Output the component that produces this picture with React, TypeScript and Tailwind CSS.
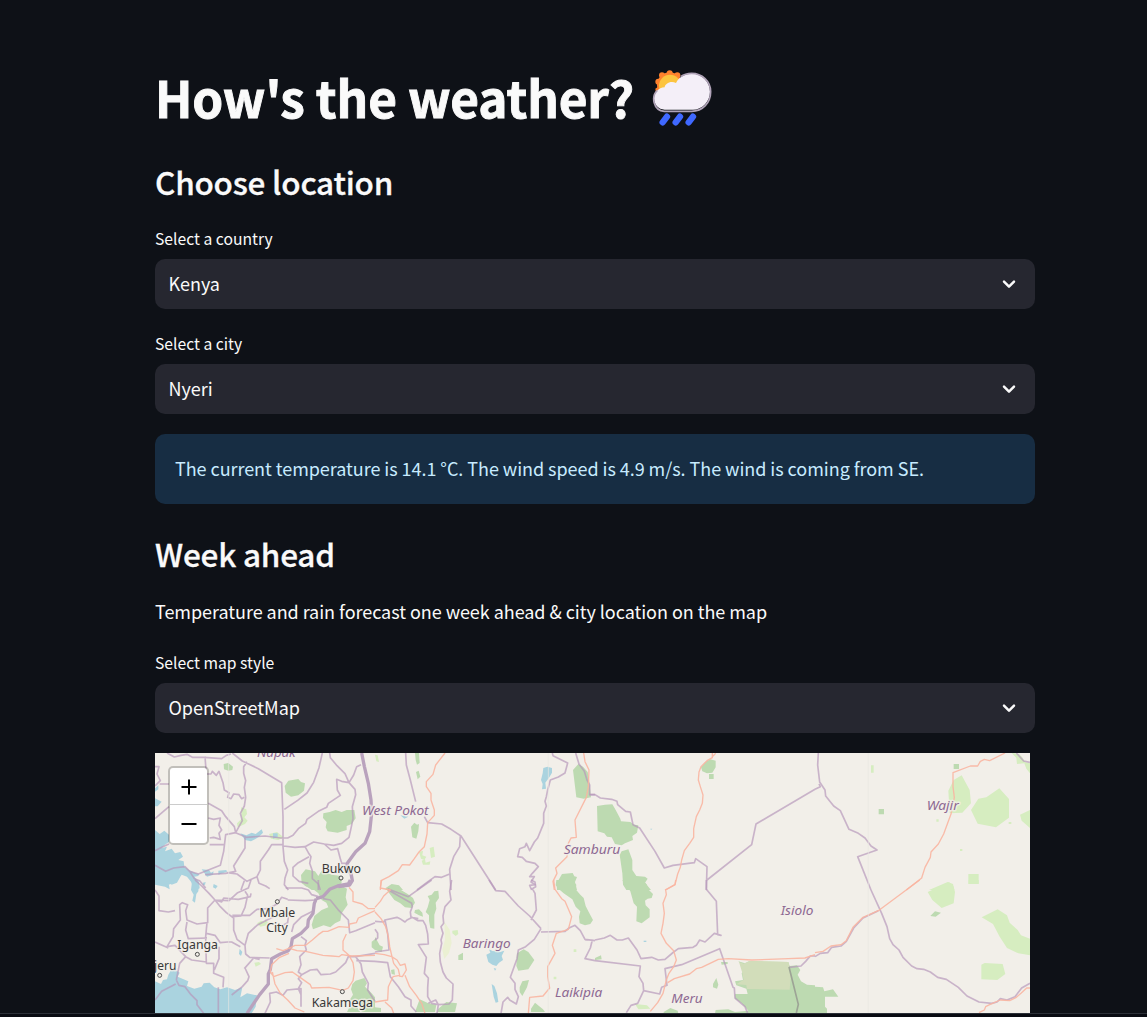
import React from "react";

const FONT = "font-['Noto_Sans_CJK_SC','Noto_Sans_CJK_JP',sans-serif]";

function RainCloud() {
  return (
    <svg viewBox="0 0 180 170" className="mb-px h-[56.7px] w-[60px]" aria-label="sun behind rain cloud">
      <g fill="#ff822d">
        <circle cx="19" cy="38" r="9" /><circle cx="30" cy="19" r="9" /><circle cx="53" cy="13" r="9" /><circle cx="76" cy="19" r="9" />
        <circle cx="53" cy="48" r="38" />
        <path d="M10 59l12-8 4 14-14 8z" />
      </g>
      <circle cx="54" cy="50" r="33" fill="#fcc43f" />
      <path d="M38 122C19 122 6 106 6 88c0-17 13-32 32-33 1-10 17-21 34-13C81 22 101 14 119 14c31 0 55 24 55 54s-24 54-51 54z" fill="#f4eff8" />
      <path d="M16 64C-3 82 3 124 37 127h82c33 0 57-26 57-59 0-31-26-55-57-55-13 0-25 4-33 10" fill="none" stroke="#b0a3b8" strokeWidth="5" />
      <g stroke="#3f68ff" strokeWidth="19" strokeLinecap="round">
        <path d="M45 143L32 160M84 143L71 160M123 143L110 160" />
      </g>
    </svg>
  );
}

function Select({ label, value }: { label: string; value: string }) {
  return (
    <div className="flex flex-col">
      <div className="flex h-[31px] items-start text-[15.7px] leading-[22px] text-[#fafafa]">{label}</div>
      <button className="flex h-[50px] w-full items-center justify-between rounded-[10px] bg-[#262730] pr-[19px] pl-[13.5px] text-left text-[18px] leading-[30px] tracking-[-0.02px] text-[#fafafa]">
        <span className="pb-[2px]">{value}</span>
        <svg viewBox="0 0 14 10" className="h-[10px] w-[14px]" fill="none" stroke="#fafafa" strokeWidth="2.5" strokeLinecap="round" strokeLinejoin="round">
          <path d="M2 2.6l5 5 5-5" />
        </svg>
      </button>
    </div>
  );
}

type Tile = { x: number; y: number; green?: string; lime?: string; water?: string; roads?: string; borders?: string; thick?: string };

/* Map artwork, split in tiles; three units are one pixel. */
const tiles: Tile[] = [
  {
    x: 0, y: -9,
    green: "M389 108L400 92 430 87 438 96 450 100 447 122 430 136 408 140 392 128zM505 190L524 186 542 180 560 186 575 180 598 180 602 205 590 222 575 228 575 240 548 248 518 244 512 232 515 216 504 204zM206 42L220 39 234 50 232 60 220 62 207 58zM438 375L452 358 480 364 490 378 500 362 530 374 558 378 560 400 536 420 470 420 440 400z",
    lime: "M258 172L274 178 276 192 268 202 278 212 270 222 248 232 246 220 260 206zM342 252L366 246 386 262 370 270 348 266z",
    water: "M0 240L14 252 28 242 42 254 42 276 30 284 20 294 36 290 30 304 50 296 60 310 76 306 84 320 70 330 86 334 88 350 102 360 122 370 132 372 130 378 118 380 132 395 134 415 122 420 108 395 96 380 80 374 76 380 66 398 50 404 40 394 44 418 30 410 0 404zM256 250L274 256 290 248 302 252 320 238 324 248 312 260 300 268 288 274 270 270zM354 250L368 250 368 262 354 266zM140 358L162 360 168 368 176 364 174 374 156 380zM190 362L214 360 216 366 202 370 190 374zM0 115L10 106 10 118 0 125zM0 145L20 155 8 169 0 169zM144 398L152 396 150 404 144 406zM176 402L188 408 182 416 174 412z",
    borders: "M36 9L58 21 78 16 96 13 112 22 148 22 200 26 214 16 228 12M232 9L262 33 310 56 380 98 384 200 384 290 388 334 398 360 390 384 388 404 400 420M502 9L492 53 476 97 456 129 428 151 388 178M524 9L526 23 546 47 570 71 582 98 600 118 602 134 592 170 594 206 588 235 582 262 560 280 536 286 508 282 476 276 450 290 420 292 386 288M618 44L605 50 596 75 582 98 560 94 545 88 547 120 556 136 520 160 515 172 490 184 456 208 452 220 430 236 414 256 398 264 378 264M378 264L330 258 274 262 242 248 238 230 212 200 200 182 160 160M0 50L12 50 6 72 16 92 0 108M14 102L42 102M150 20L154 72 168 72 172 64 184 76 192 64 204 98 208 120 222 128 218 142 228 146 236 132 252 134 260 146 268 142M276 35L266 50 266 70 272 92 268 112 272 142 268 168 256 190 262 212 254 226 242 248M0 206L42 170M160 204L176 208 196 204 192 226 200 240 192 250 196 268 176 262 164 264M164 284L206 284M242 248L212 254 206 304 196 346 160 360 130 372 104 364 90 350 56 354 32 364 0 346M270 262L270 294 236 348 242 364 212 370 150 374M216 368L246 372 276 394 306 380 316 360 316 334 340 300 350 284 384 284M450 290L460 308 468 320 464 340 472 362 472 386 490 402 496 420M462 320L430 338 414 352 414 378 432 394 460 400M508 282L528 300 548 296 556 326 560 340 580 340M104 364L118 386 134 392 152 414M268 392L258 420M306 380L312 400 332 408 344 416M42 282L20 292 0 302",
    thick: "M620 9L628 49 640 100 648 150 650 190 644 245 630 280 602 305 578 338 572 356 588 370 592 392 584 405 550 410",
  },
  {
    x: 0, y: 381,
    green: "M440 0L486 0 494 14 506 26 526 22 540 14 560 18 576 26 572 52 578 74 560 100 556 122 540 130 526 142 506 136 474 148 470 134 478 108 500 90 520 82 514 68 500 60 490 40 470 24 450 18zM592 312L602 302 628 294 636 310 630 320 650 340 660 352 660 396 620 396 618 382 596 364 584 360 594 344 588 328zM582 384L604 376 616 396 576 396zM650 185L660 178 660 210 650 202z",
    lime: "M306 130L318 122 328 126 332 118 340 128 336 136 316 140zM298 248L312 246 318 252 302 260z",
    water: "M110 0L118 8 126 0 132 10 130 34 124 42 120 68 112 62 116 44 108 30 110 14zM40 284L52 264 74 278 68 290 100 304 96 318 118 326 140 320 146 310 164 308 178 322 196 328 216 322 240 330 262 322 256 352 276 340 306 346 302 380 290 400 0 400 0 304 18 312 24 300 36 298zM254 206L262 216 258 228 252 222zM34 0L48 0 48 12 40 14z",
    roads: "M582 22L594 36 594 64 622 72 640 86 660 86M660 92L610 114 604 128 584 132 582 142 552 140 518 154 504 154 490 164 472 180 452 196 420 196 404 204 384 212 364 206M400 204L426 212 452 214 504 226 530 228 552 230 560 224 590 228 660 226M574 162L564 184 564 210 582 226 594 248 598 276 594 302 580 324 562 332M402 220L374 232 350 254 346 276 356 290 390 278 412 276 432 290 452 304 466 314 470 324 522 322 566 332M352 276L360 312 376 340 398 360 420 384 448 396",
    borders: "M0 30L12 48 12 92 40 96 60 92M120 0L140 18 162 40 180 60 222 62 248 38 280 24 288 0M180 60L158 84 158 128 126 132 96 120 92 92 98 74 82 68 74 74 76 120 56 146 54 170 36 200M180 60L200 66 206 54 250 58 286 50 288 40M270 34L278 46 270 82 258 108 232 110M180 60L196 80 214 98 236 114 236 150 246 178 270 196M232 106L284 106 306 88 340 86 366 72 380 52 398 58M270 196L280 160 306 136 336 120 356 110M270 196L272 222 284 232 344 234M96 126L92 150 100 176 156 174M156 128L152 170 154 250 176 250 176 280 206 292 204 322M154 160L180 166 196 188 218 186 230 186 256 200M192 200L192 236 178 270M268 266L296 234 314 238M270 264L282 290 278 302 262 320 230 345M92 230L110 240 154 246M92 230L74 250 64 300M36 200L60 196 92 230M64 300L72 316 90 320 108 344 126 362 126 374 146 400M0 360L20 334 62 312M190 322L190 400M0 186L40 204M330 400L346 366 344 340 364 336 384 346 396 330 438 326 438 380M438 170L454 182 450 196 454 210 434 230 438 254 430 276 440 284 466 270 486 268 498 284 526 282 542 276 572 248 580 230 602 230M440 284L430 296 440 308 430 326 438 344M660 128L602 152 584 158 580 120 552 92 526 60 504 56M602 230L618 252 622 276 640 310 638 330 660 364M602 230L660 220M660 244L604 242M490 30L490 0M476 92L440 110 416 134 410 156M398 60L450 62 484 60M392 24L440 24 460 30 470 44 490 50M400 110L398 128 384 136",
    thick: "M484 56L478 70 474 100 460 120 458 140 438 160 412 176 408 200 400 212 376 222 350 236 346 268 340 282 340 312 314 344 276 400M484 56L504 50 524 28 548 18 580 12 586 0",
  },
  {
    x: 660, y: -9,
    green: "M120 9L132 9 134 39 126 44 122 30zM123 66L131 62 136 80 128 88zM108 230L118 218 126 224 132 222 130 244 124 266 112 262zM594 60L610 42 624 50 638 66 642 86 648 142 626 146 604 142zM545 400L561 372 593 369 598 379 606 381 600 396 606 420 546 420zM32 414L50 402 72 406 84 420 32 420z",
    lime: "M132 306L144 302 142 316 154 320 148 330 138 326zM164 294L176 290 180 320 168 324zM140 332L150 328 152 338 166 334 164 344 144 344zM0 14L8 16 12 36 4 34z",
    water: "M505 54L517 50 531 54 531 68 523 82 511 98 513 116 501 118 503 102 498 90 503 70zM76 196L100 200 88 206z",
    roads: "M210 9L182 45 174 73 154 95 154 110 168 130 168 150 178 180 178 196 158 218 156 252 148 290 132 306 118 326 104 345 82 344 70 362 42 380 18 392 16 420M626 9L630 35 642 60 640 110 634 142 600 210 604 262 588 264 580 280 576 320 542 354 546 370 534 394 538 420",
    borders: "M92 9L94 45 106 90 122 155M148 200L158 218 200 222 228 238 258 258 362 420M256 258L254 290 236 320 224 358 228 420M224 372L200 382 180 380 160 394 126 420M532 9L534 17 578 39 570 69 550 81 526 90 518 120 514 140 510 154 514 168 506 190 506 220 488 264 478 276 464 302 454 280 450 290 434 296 428 320 442 322 454 334 480 340 490 350 472 370 464 380 478 380 468 396 480 404 464 406 470 420M602 9L612 42 628 64 636 90 644 105 644 134 660 134",
  },
  {
    x: 660, y: 381,
    green: "M34 28L50 16 66 16 78 30 98 42 114 54 120 68 110 84 90 82 76 70 58 60 46 44zM178 34L190 32 192 54 182 68 184 86 178 104 178 146 166 144 162 122 162 106 152 96 158 82 164 60 158 48 170 44zM120 90L132 88 142 98 144 110 132 106 118 98zM544 0L590 0 604 14 602 28 616 44 626 54 632 78 640 94 654 120 646 132 630 136 614 130 612 110 616 94 602 80 592 58 566 40 552 28 542 16zM426 220L446 208 460 216 478 240 460 268 430 272 424 258zM434 322L442 304 462 300 456 322 442 348 434 336zM186 396L190 386 214 366 246 370 240 396zM468 386L480 368 504 388 510 396 468 396zM120 396L134 358 160 370 184 374 180 396zM0 170L14 196 24 200 20 216 0 210zM250 226L264 218 264 240 250 240zM0 382L18 384 18 396 0 396zM48 270L58 268 60 284 50 282z",
    lime: "M232 152L248 150 250 162 242 168 232 160zM536 290L544 290 544 298 536 298zM596 208L604 208 604 216 596 216z",
    water: "M334 224L346 218 342 208 354 214 368 210 374 216 388 212 380 228 384 240 372 248 364 258 352 254 340 246zM350 312L358 318 366 340 370 366 362 368 356 350zM356 264L364 266 360 272z",
    roads: "M20 0L16 24 46 30 26 48 16 64 0 82M0 96L18 116 32 140 40 170 44 200 50 226 56 250 70 268 74 286 54 290 40 320 38 360 0 366M0 220L28 224 50 230 66 240 76 256 90 252 94 270 82 290 72 288M90 286L104 320 124 346 140 370 150 400M30 366L50 384 56 400M536 0L540 28 560 56 570 64 590 110 580 148 544 160 532 196 540 220 518 260 518 290 524 324 504 348 464 352 460 400",
    borders: "M230 0L224 34 228 60 210 80 204 108 206 130 198 140 204 160 198 180 200 190 194 220 196 246 204 276 214 294 234 312 232 360 222 372 190 374 182 360 160 370M30 120L66 112 78 118 90 126 96 120 112 112 128 122 144 122 152 136 158 162 160 192 130 194 154 232 148 280 160 294 158 324 158 350 170 370 190 374 186 400M342 0L362 32 390 34 430 78 464 108 498 146M498 146L478 178 452 200 430 210 426 236 406 292 420 310 420 328 430 350 424 372 404 360 398 352 384 366 378 400M498 156L570 154 582 144 600 136 616 152 630 178 660 182M468 0L480 6 482 20 472 26 480 40 484 90 468 120M0 124L26 126 30 120 38 160 42 210 0 216M0 148L8 160 8 174 0 180M40 30L110 70 112 80 106 96 108 112 130 116M38 26L100 50 170 0M0 244L38 248 46 290 70 320 90 350 108 360 108 378 124 396M630 180L652 180 646 204 630 236 660 242",
  },
  {
    x: 1320, y: -9,
    green: "M6 168L30 164 52 163 62 180 76 206 78 214 106 216 118 224 130 226 126 248 112 258 114 270 90 280 80 286 60 282 50 262 36 260 28 250 8 244zM74 314L80 304 100 298 112 330 112 360 124 378 150 380 158 386 150 398 168 420 94 420 84 404 82 370zM318 52L334 34 346 28 362 32 362 52 352 68 336 70 322 64zM342 72L356 72 356 87 342 87z",
    water: "M166 236L172 236 168 240z",
    roads: "M352 9L352 23 336 32 318 50 312 66 310 90 316 110 324 135 322 160 314 180 304 200 296 236 296 262 284 280 268 302 260 330 256 352 248 372 240 404 210 420M352 20L362 10",
    borders: "M-16 134L0 134 16 144 50 148 66 154 68 164 92 184 106 186 114 224 134 234 180 304 208 354 234 346 298 338 302 326 336 350 334 420M336 390L470 284 483 222 660 118",
  },
  {
    x: 1320, y: 381,
    green: "M82 0L144 0 156 14 158 26 174 42 170 54 158 56 150 62 152 76 164 88 164 112 140 130 124 124 126 80 116 70 106 34zM430 244L450 250 462 244 482 244 580 246 584 258 606 256 616 270 608 284 618 304 636 314 660 316 660 400 360 400 362 390 400 388 420 396 460 392 440 370 420 356 420 342 458 342 454 326 424 316 420 304 444 300 440 280 450 266zM354 312L364 294 370 314 366 326 354 322zM378 246L398 246 398 252 380 254zM206 396L226 384 248 392 250 400 206 400zM0 234L18 226 20 238 0 240z",
    lime: "M120 372L156 376 166 386 130 388z",
    water: "M146 182L154 182 154 186 146 186z",
    roads: "M242 0L240 14 212 30 214 44 204 70 208 100 204 130 198 160 214 190 236 212 244 240 236 260 222 280 214 300 204 340 188 368 166 394M218 308L238 296 284 282 304 266 320 262 370 238 400 236 470 240 580 236 630 234 660 224",
    borders: "M334 0L334 28 364 64 368 164 378 166 358 160 330 186 314 180 304 196 294 202 250 206 236 216 210 238 190 240 170 232 138 236 126 210 100 174 82 180 66 180 46 166 28 174 0 180M0 242L136 258 132 290 144 310 146 332 128 370 108 376 94 398M146 332L194 342 200 322 216 316 210 266 260 254 374 206 414 322 418 324 420 354 450 380 458 400M660 228L646 228 632 244 618 258 582 262",
  },
  {
    x: 1980, y: -9,
    green: "M416 42L432 42 432 57 416 57zM191 177L207 177 207 193 191 193z",
    lime: "M400 122L416 90 440 76 464 120 468 160 442 188 404 190zM468 180L490 146 514 142 553 115 582 147 582 203 543 232 488 221zM460 372L491 372 491 402 460 402zM615 194L645 180 645 234 620 212zM590 9L612 12 622 22 630 36 645 40 645 70 634 56 628 40 606 42 604 24zM342 420L398 396 414 402 418 420zM168 46L176 46 176 68 168 68zM581 216L589 216 589 222 581 222zM364 208L371 208 371 215 364 215zM435 297L442 297 442 303 435 303z",
    roads: "M570 9L524 32 508 28 496 34 488 48 466 48 414 68 414 110 418 142 408 192 386 252 370 282 348 306 346 322 330 352 320 384 274 420",
    borders: "M10 9L8 45 14 96 30 120 32 138 56 168 76 182 102 238 130 250 150 264 168 288 186 300 128 320 168 420M12 102L16 110 0 118M604 9L626 33 645 37",
  },
  {
    x: 1980, y: 381,
    green: "M0 320L24 322 28 334 54 328 70 350 30 350 30 380 36 386 36 400 0 400zM346 108L360 94 378 98 362 110z",
    lime: "M338 36L392 12 402 6 416 20 420 36 416 70 380 84 352 60zM461 0L491 0 491 11 461 11zM500 112L548 88 576 106 584 128 608 150 618 166 645 176 645 226 610 220 576 204 554 170 534 132zM499 254L509 249 563 252 571 282 547 300 499 298z",
    roads: "M314 0L190 92 144 112 114 142 94 182 78 194 48 198 24 214 0 218M645 324L635 324 618 340 604 352 584 362 556 360 524 374 512 380 508 390 492 398",
    borders: "M168 30L200 100 216 140 224 176 234 194 252 210 264 232 290 258 306 266 326 268 346 276 368 292 394 298 430 322 456 348 492 366 530 370 546 366 556 356 576 360 600 350 620 324 645 310M190 92L144 114 116 144 94 184 78 198 50 202 38 218 16 220 0 230",
  },
];

const MapLabel = ({ x, y, w, italic, children }: { x: number; y: number; w: number; italic?: boolean; children: string }) => (
  <text
    x={x} y={y} textLength={w} lengthAdjust="spacingAndGlyphs" textAnchor="middle"
    className={italic ? "text-[39px] italic" : "text-[39px]"}
    fill={italic ? "#8d6892" : "#383838"} stroke="#f2efe9" strokeOpacity=".8" strokeWidth="9" strokeLinejoin="round" paintOrder="stroke"
  >
    {children}
  </text>
);

function CityMap() {
  return (
    <div className="relative h-[260px] w-[875px] overflow-hidden bg-[#f2efe9]">
      <svg viewBox="0 0 2625 780" className="block h-[260px] w-[875px] font-['Noto_Sans',sans-serif]" fill="none" strokeLinejoin="round">
        {tiles.map((t, i) => (
          <g key={i} transform={`translate(${t.x} ${t.y})`}>
            <path d={t.green} fill="#bddab1" />
            <path d={t.lime} fill="#d6edc0" />
            <path d={t.water} fill="#aad3df" />
          </g>
        ))}
        <path d="M1752 627L1766 632 1784 624 1900 627 1908 660 1904 710 1776 708 1774 696 1744 694 1766 680 1762 660z" fill="#d2ddba" />
        <path d="M868 506L884 530 890 570 882 600 868 618 862 590 870 560z" fill="#ebf0d3" />
        {tiles.map((t, i) => (
          <g key={i} transform={`translate(${t.x} ${t.y})`}>
            <path d={t.borders} stroke="#b597b9" strokeOpacity=".68" strokeWidth="5" />
            <path d={t.thick} stroke="#b9a2bd" strokeWidth="10" />
            <path d={t.roads} stroke="#f9b5a1" strokeOpacity=".9" strokeWidth="4" />
          </g>
        ))}
        <path d="M1902 642L1914 690 1930 754 1924 780" stroke="#9da496" strokeWidth="5" />
        <path d="M221 0v780M1180 0v780M2140 0v780" stroke="#eae7e2" strokeWidth="2" />
        <g fill="#f2efe9" stroke="#4b4b4b" strokeWidth="3">
          <circle cx="558" cy="375" r="6" /><circle cx="367" cy="446" r="6" /><circle cx="127" cy="604" r="6" /><circle cx="14" cy="667" r="6" /><circle cx="562" cy="716" r="6" />
        </g>
        <MapLabel x={364} y={11} w={116} italic>Napak</MapLabel>
        <MapLabel x={721} y={187} w={200} italic>West Pokot</MapLabel>
        <MapLabel x={1311} y={304} w={170} italic>Samburu</MapLabel>
        <MapLabel x={995} y={585} w={144} italic>Baringo</MapLabel>
        <MapLabel x={1271} y={732} w={142} italic>Laikipia</MapLabel>
        <MapLabel x={1596} y={751} w={94} italic>Meru</MapLabel>
        <MapLabel x={1926} y={485} w={98} italic>Isiolo</MapLabel>
        <MapLabel x={2363} y={170} w={96} italic>Wajir</MapLabel>
        <MapLabel x={559} y={359} w={118}>Bukwo</MapLabel>
        <MapLabel x={367} y={491} w={107}>Mbale</MapLabel>
        <MapLabel x={366} y={537} w={65}>City</MapLabel>
        <MapLabel x={128} y={589} w={122}>Iganga</MapLabel>
        <MapLabel x={17} y={652} w={94}>Njeru</MapLabel>
        <MapLabel x={562} y={761} w={184}>Kakamega</MapLabel>
      </svg>
      <div className="absolute top-[13px] left-[13px] flex h-[79px] w-[41px] flex-col overflow-hidden rounded-[5px] border-2 border-black/20 bg-white bg-clip-padding">
        <button className="flex h-[37px] items-center justify-center border-b border-[#ccc] pt-px">
          <svg viewBox="0 0 16 16" className="h-4 w-4" stroke="#000" strokeWidth="2"><path d="M.5 8h15M8 .5v15" /></svg>
        </button>
        <button className="flex flex-1 items-center justify-center">
          <svg viewBox="0 0 16 16" className="h-4 w-4" stroke="#000" strokeWidth="2"><path d="M.5 8h15" /></svg>
        </button>
      </div>
    </div>
  );
}

export default function App() {
  return (
    <div className={`h-[1017px] w-full overflow-hidden bg-[#0e1117] text-[#fafafa] ${FONT}`}>
      <main className="ml-[155px] flex w-[880px] flex-col">
        <h1 className="mt-[63px] flex h-[70px] items-center text-[49.5px] leading-[66px] font-bold tracking-[-0.1px] whitespace-nowrap [-webkit-text-stroke:0.9px_#fafafa]">
          <span className="w-[497px] pb-[2px]">How's the weather?</span>
          <RainCloud />
        </h1>
        <h2 className="mt-[27px] h-[42px] text-[31.5px] leading-[42px] font-medium tracking-[-0.22px] [-webkit-text-stroke:0.3px_#fafafa]">Choose location</h2>
        <div className="mt-[26px]"><Select label="Select a country" value="Kenya" /></div>
        <div className="mt-[24px]"><Select label="Select a city" value="Nyeri" /></div>
        <div className="mt-5 flex h-[70px] items-center rounded-[10px] bg-[#172d43] px-5 pb-[2px] text-[18px] tracking-[-0.05px] text-[#c7ebff]">
          The current temperature is 14.1 °C. The wind speed is 4.9 m/s. The wind is coming from SE.
        </div>
        <h2 className="mt-[28px] h-[42px] text-[31.5px] leading-[42px] font-medium tracking-[-0.22px] [-webkit-text-stroke:0.3px_#fafafa]">Week ahead</h2>
        <p className="mt-[22px] h-[30px] text-[18px] leading-[30px] tracking-[-0.045px]">Temperature and rain forecast one week ahead &amp; city location on the map</p>
        <div className="mt-[26px]"><Select label="Select map style" value="OpenStreetMap" /></div>
        <div className="mt-5"><CityMap /></div>
      </main>
      <div className="h-1 border-t border-[#2c3038] bg-[#090b12]" />
    </div>
  );
}
